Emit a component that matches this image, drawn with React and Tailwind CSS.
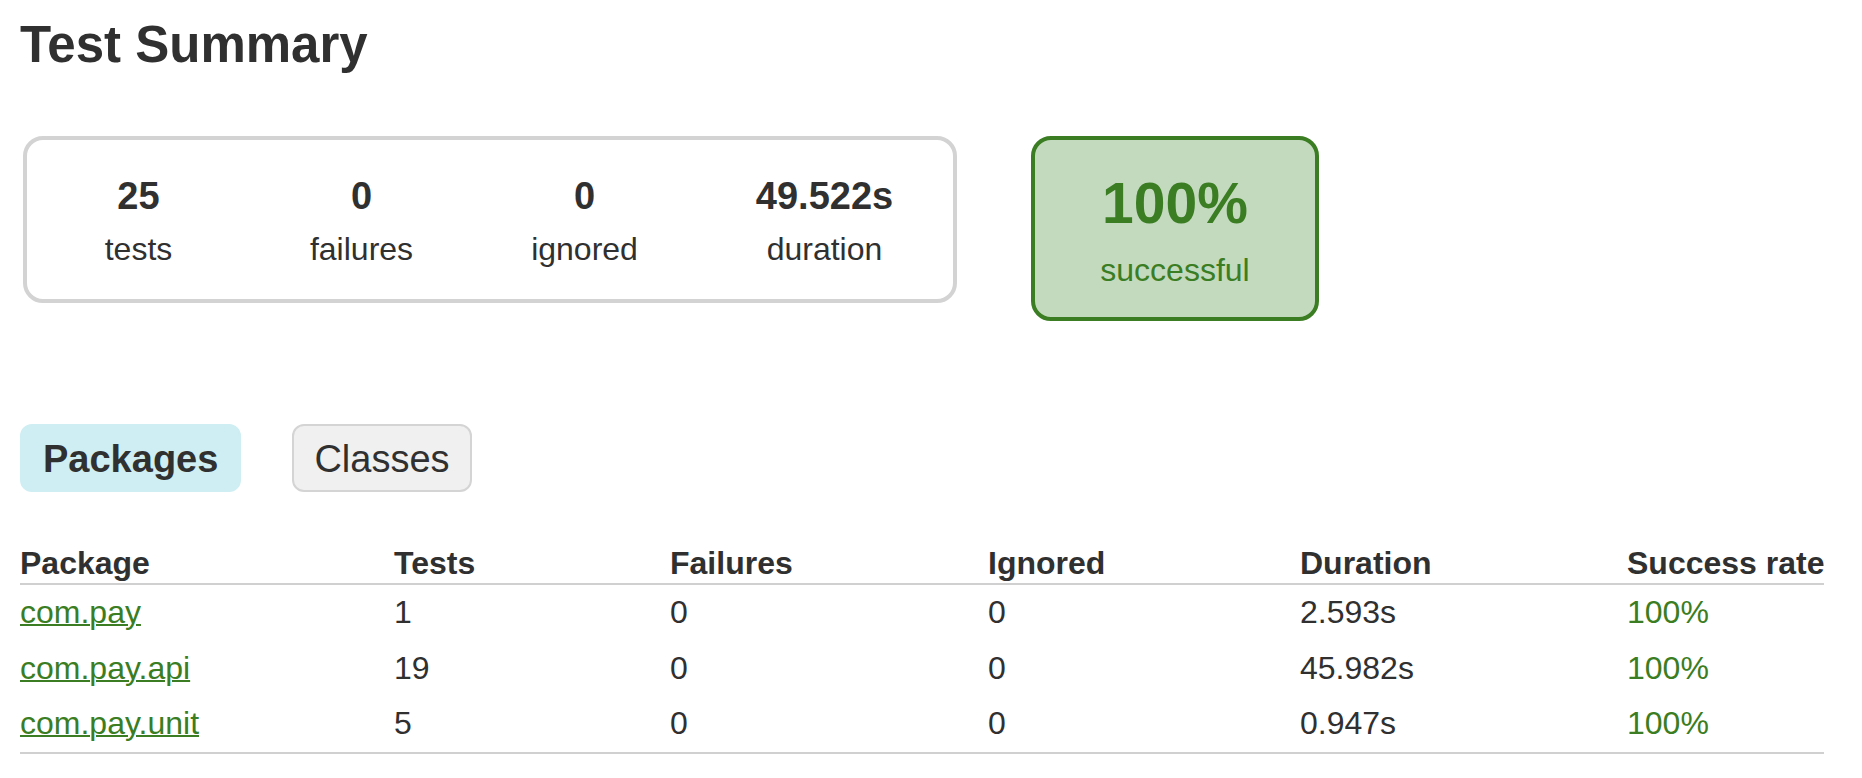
import React from 'react';

const stats = [
  { value: '25', label: 'tests', w: 'w-[223px]' },
  { value: '0', label: 'failures', w: 'w-[223px]' },
  { value: '0', label: 'ignored', w: 'w-[223px]' },
  { value: '49.522s', label: 'duration', w: 'w-[257px]' },
];

const packages = [
  { name: 'com.pay', tests: 1, failures: 0, ignored: 0, duration: '2.593s', rate: '100%' },
  { name: 'com.pay.api', tests: 19, failures: 0, ignored: 0, duration: '45.982s', rate: '100%' },
  { name: 'com.pay.unit', tests: 5, failures: 0, ignored: 0, duration: '0.947s', rate: '100%' },
];

const columns = [
  { title: 'Package', w: 'w-[374px]' },
  { title: 'Tests', w: 'w-[276px]' },
  { title: 'Failures', w: 'w-[318px]' },
  { title: 'Ignored', w: 'w-[312px]' },
  { title: 'Duration', w: 'w-[327px]' },
  { title: 'Success rate', w: 'w-[180px]' },
];

export default function App() {
  return (
    <div className="min-h-screen bg-white text-[#303030] pt-[15px] pl-[20px] font-['Liberation_Sans',Arial,sans-serif] text-[32px]">
      <h1 className="text-[51px] leading-[60px] font-bold">Test Summary</h1>

      {/* Summary boxes */}
      <div className="mt-[61px] ml-[3px] flex items-start">
        <div className="flex border-4 border-[#d3d3d3] rounded-[20px]">
          {stats.map((s, i) => (
            <div key={i} className={`${s.w} flex flex-col items-center pt-[34px] pb-[32px]`}>
              <div className="text-[38px] leading-[44px] font-bold">{s.value}</div>
              <div className="mt-[13px] leading-[36px]">{s.label}</div>
            </div>
          ))}
        </div>
        <div className="ml-[74px] w-[288px] flex flex-col items-center border-4 border-[#3a7d22] bg-[#c4dabf] rounded-[20px] text-[#3a7d22] pt-[31px] pb-[29px]">
          <div className="text-[57px] leading-[64px] font-bold">100%</div>
          <div className="mt-[17px] leading-[36px]">successful</div>
        </div>
      </div>

      {/* Tabs */}
      <div className="mt-[103px] flex gap-[51px]">
        <div className="border-2 border-[#ceeef3] bg-[#ceeef3] rounded-[12px] px-[21px] pt-[11px] pb-[9px] text-[38px] leading-[44px] font-bold">
          Packages
        </div>
        <div className="border-2 border-[#d4d4d4] bg-[#f0f0f0] rounded-[12px] px-[20px] pt-[11px] pb-[9px] text-[38px] leading-[44px]">
          Classes
        </div>
      </div>

      {/* Package table */}
      <table className="mt-[53px] border-collapse border-b-2 border-[#d0d0d0]">
        <thead>
          <tr className="border-b-2 border-[#d0d0d0]">
            {columns.map((c) => (
              <th key={c.title} className={`${c.w} text-left font-bold leading-[36px] p-0 pb-[2px] whitespace-nowrap`}>
                {c.title}
              </th>
            ))}
          </tr>
        </thead>
        <tbody>
          {packages.map((p) => (
            <tr key={p.name} className="leading-[35.5px]">
              <td className="py-[10px]">
                <a href="#" className="text-[#3a7d22] underline decoration-2">{p.name}</a>
              </td>
              <td className="py-[10px]">{p.tests}</td>
              <td className="py-[10px]">{p.failures}</td>
              <td className="py-[10px]">{p.ignored}</td>
              <td className="py-[10px]">{p.duration}</td>
              <td className="py-[10px] text-[#3a7d22]">{p.rate}</td>
            </tr>
          ))}
        </tbody>
      </table>
    </div>
  );
}
